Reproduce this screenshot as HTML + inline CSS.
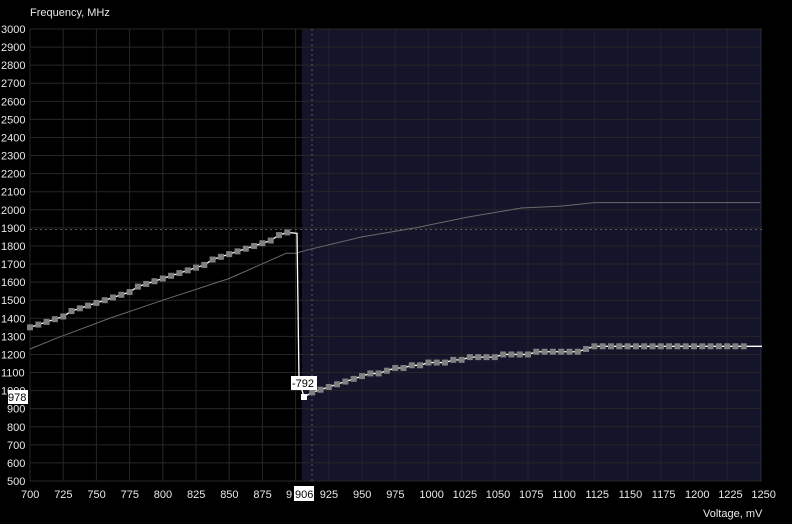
<!DOCTYPE html>
<html><head><style>
html,body{margin:0;padding:0;background:#000;}
body{width:792px;height:524px;overflow:hidden;position:relative;font-family:"Liberation Sans",sans-serif;}
svg{position:absolute;left:0;top:0;}
text{font-family:"Liberation Sans",sans-serif;font-size:11px;fill:#e8e8e8;}
</style></head><body>
<svg id="s" width="792" height="524" xmlns="http://www.w3.org/2000/svg">
<rect x="302" y="29" width="460" height="452" fill="#14142a"/>
<g id="grid"></g>
<line x1="312" y1="29" x2="312" y2="481" stroke="#5a5a6a" stroke-dasharray="2,3"/>
<line x1="30" y1="229.5" x2="762" y2="229.5" stroke="#5a5a5a" stroke-dasharray="2,3"/>
<g id="curves"></g>
<text x="30" y="16">Frequency, MHz</text>
<text x="703" y="517">Voltage, mV</text>
<g id="labels"></g>
<rect x="291" y="376" width="26" height="14" fill="#fff"/>
<text x="292" y="387" style="fill:#000">-792</text>
<rect x="8" y="390" width="20" height="14" fill="#fff"/>
<text x="8" y="401" style="fill:#000">978</text>
<rect x="294" y="486" width="20" height="15" fill="#fff"/>
<text x="295" y="498" style="fill:#000">906</text>
</svg>
<script>
var NS="http://www.w3.org/2000/svg";
function el(t,a,p){var e=document.createElementNS(NS,t);for(var k in a)e.setAttribute(k,a[k]);document.getElementById(p).appendChild(e);return e;}
function X(v){return 30+(v-700)/25*33.2;}
function Y(f){return 481-(f-500)*0.1808;}
for(var i=0;i<=22;i++){var x=X(700+i*25);el("line",{x1:x,y1:29,x2:x,y2:481,stroke:x>302?"#22222e":"#262626"},"grid");
 var l=700+i*25; if(l!=900){var t=el("text",{x:x-9,y:498},"labels");t.textContent=l;}}
var t9=el("text",{x:286,y:498},"labels");t9.textContent="9";
for(var j=0;j<=25;j++){var y=29+j*18.08;el("line",{x1:30,y1:y,x2:762,y2:y,stroke:"#262626"},"grid");
 var f=3000-j*100;var t=el("text",{x:f>=1000?1:7,y:y+4},"labels");t.textContent=f;}
var pts=[[700,1230],[720,1290],[760,1400],[800,1500],[850,1620],[893,1760],[900,1760],[910,1780],[950,1850],[990,1900],[1030,1960],[1070,2010],[1100,2020],[1125,2040],[1250,2040]];
el("polyline",{points:pts.map(function(p){return X(p[0])+","+Y(p[1]);}).join(" "),fill:"none",stroke:"#6a6a6a","stroke-width":1},"curves");
var up=[],lo=[];
for(var v=700;v<=894;v+=6.25){var f=1350+(v-700)*(1870-1350)/193.75;f=Math.round(f/15)*15;up.push([X(v),Y(f)]);}
for(var v=912.5;v<=1240;v+=6.25){var f=978+280*(1-Math.exp(-(v-906)/100));if(f>1245)f=1245;f=Math.round(f/15)*15;if(v>=1125)f=1245;lo.push([X(v),Y(f)]);}
var line=up.slice();line.push([297,Y(1870)],[299,380],[304,397]);line=line.concat(lo);line.push([762,Y(1245)]);
el("polyline",{points:line.map(function(p){return p[0]+","+p[1];}).join(" "),fill:"none",stroke:"#fff","stroke-width":1.3},"curves");
up.concat(lo).forEach(function(p){el("rect",{x:p[0]-3,y:p[1]-3,width:6,height:6,fill:"#808080"},"curves");});
el("rect",{x:301,y:394,width:6,height:6,fill:"#fff"},"curves");
</script>
</body></html>
